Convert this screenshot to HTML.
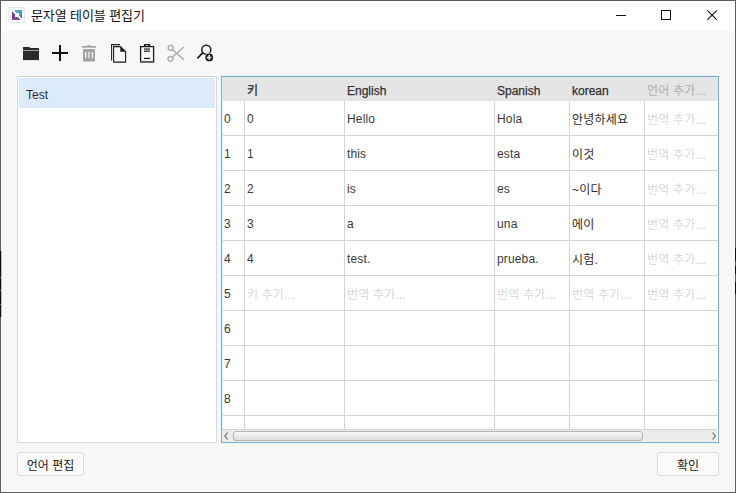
<!DOCTYPE html>
<html lang="ko">
<head>
<meta charset="utf-8">
<title>문자열 테이블 편집기</title>
<style>
html,body{margin:0;padding:0;}
body{width:736px;height:493px;overflow:hidden;background:#f7f7f7;position:relative;
 font-family:"Liberation Sans","Noto Sans CJK KR",sans-serif;font-size:12px;color:#222;}
.abs{position:absolute;}
#win{position:absolute;left:0;top:0;width:736px;height:493px;box-sizing:border-box;border:1px solid #5c5c5c;box-shadow:inset 0 0 0 1px #fff;background:#f7f7f7;}
#titlebar{position:absolute;left:1px;top:1px;width:734px;height:30px;background:#fff;}
#title{position:absolute;left:31px;top:8px;letter-spacing:-0.1px;font-size:13px;line-height:16px;color:#111;white-space:nowrap;}
#list{position:absolute;left:17px;top:76px;width:198px;height:365px;border:1px solid #d8d8d8;border-top-color:#cecece;background:#fff;}
#sel{position:absolute;left:1px;top:1px;width:196px;height:30px;background:#dcebfb;}
#sel span{position:absolute;left:7px;top:9px;line-height:16px;white-space:nowrap;color:#2a2f36;}
#table{position:absolute;left:221px;top:76px;width:496px;height:365px;border:1px solid #80b1cd;border-top-color:#7aa7c1;background:#fff;overflow:hidden;box-shadow:inset 1px 1px 0 #d9ebf6, 0 0 0 1px #eaf5fa;}
#thead{position:absolute;left:1px;top:1px;width:495px;height:23px;background:#e5e5e5;}
.th{position:absolute;top:7px;line-height:14px;font-weight:normal;-webkit-text-stroke:0.25px #303030;color:#303030;white-space:nowrap;font-size:12px;}
.vl{position:absolute;top:24px;width:1px;height:328px;background:#d4d4d4;}
.hl{position:absolute;left:1px;width:495px;height:1px;background:#d4d4d4;}
.c{position:absolute;line-height:16px;white-space:nowrap;color:#3a3a3a;margin-top:1px;letter-spacing:0.15px;}
.g{color:#cdcdcd;}
.k{margin-top:2px;letter-spacing:0.2px;font-weight:400;color:#2c2c2c;}
.g.k{color:#c8c8c8;font-weight:300;}
.th.k{margin-top:0px;font-weight:400;color:#2a2a2a;}
.th.g.k{color:#b4b4b4;}
.th.g{color:#b4b4b4;-webkit-text-stroke:0.15px #b4b4b4;}
#hscroll{position:absolute;left:0px;top:352px;width:495px;height:13px;background:#ebebeb;border-top:1px solid #d4d4d4;box-sizing:border-box;}
#thumb{position:absolute;left:11px;top:1px;width:410px;height:10px;border:1px solid #b4b4b4;border-radius:3px;background:linear-gradient(#f8f8f8,#dedede);box-sizing:border-box;}
.btn{position:absolute;height:24px;border:1px solid #dadada;border-radius:3px;background:#fafafa;box-sizing:border-box;text-align:center;line-height:20px;padding-top:3px;font-size:12px;color:#222;}
</style>
</head>
<body>
<div id="win"></div>
<div class="abs" style="left:0;top:251px;width:1px;height:66px;background:#111;box-shadow:1px 0 0 rgba(0,0,0,0.25)"></div>
<div class="abs" style="left:0;top:277px;width:1px;height:1px;background:#666"></div>
<div class="abs" style="left:0;top:290px;width:1px;height:1px;background:#666"></div>
<div class="abs" style="left:0;top:304px;width:1px;height:1px;background:#666"></div>
<div class="abs" style="left:735px;top:248px;width:1px;height:13px;background:#111"></div>
<div class="abs" style="left:735px;top:266px;width:1px;height:8px;background:#111"></div>
<div class="abs" style="left:735px;top:282px;width:1px;height:12px;background:#111"></div>
<div id="titlebar"></div>
<div id="title">문자열 테이블 편집기</div>

<svg id="appicon" class="abs" style="left:0;top:0" width="40" height="30" viewBox="0 0 40 30">
  <defs>
    <linearGradient id="gb" x1="0" y1="0" x2="1" y2="1"><stop offset="0" stop-color="#62bfdc"/><stop offset="1" stop-color="#2b86bd"/></linearGradient>
    <linearGradient id="gp" x1="0" y1="0" x2="1" y2="1"><stop offset="0" stop-color="#6a3c98"/><stop offset="1" stop-color="#8b4f9f"/></linearGradient>
  </defs>
  <rect x="9" y="7.5" width="15.5" height="15" fill="#fff" stroke="#dfe8ee" stroke-width="1"/>
  <path d="M13.4 10H22v8.8l-3-3V13h-2.6z" fill="url(#gb)"/>
  <path d="M12 11.2V20h8.8l-3-3H15v-2.8z" fill="url(#gp)"/>
</svg>
<svg id="ctrl" class="abs" style="left:600px;top:0" width="136" height="31" viewBox="600 0 136 31">
  <rect x="616" y="15" width="10" height="1" fill="#111"/>
  <rect x="661.5" y="10.5" width="9" height="9" fill="none" stroke="#111" stroke-width="1"/>
  <path d="M707.3 10.3L716.9 19.9M716.9 10.3L707.3 19.9" stroke="#111" stroke-width="1.1" fill="none"/>
</svg>
<svg id="icons" class="abs" style="left:0;top:0" width="736" height="76" viewBox="0 0 736 76">
  <!-- folder -->
  <path d="M23 47h6.2l1.2 1H39v2H23z" fill="#2a2a2a"/>
  <rect x="23" y="50.6" width="16" height="9.5" fill="#2a2a2a"/>
  <!-- plus -->
  <rect x="52" y="52" width="16" height="2" fill="#111"/>
  <rect x="59" y="45" width="2" height="16" fill="#111"/>
  <!-- trash -->
  <g fill="#a3a3a3">
    <rect x="82" y="46" width="14" height="1.7"/>
    <rect x="87" y="45.2" width="4" height="1"/>
    <path d="M83 49h12v12.6H83zM85 52v6h1.2v-6zM88.4 52v6h1.2v-6zM91.9 52v6h1.2v-6z" fill-rule="evenodd"/>
  </g>
  <!-- copy -->
  <path d="M120 44.6H111.6V60.6" fill="none" stroke="#1c1c1c" stroke-width="1.05"/>
  <path d="M113.6 46.6h6.9l5.1 5.1V62.1h-12z" fill="none" stroke="#1c1c1c" stroke-width="1.1"/>
  <path d="M120.3 46.6v5.1h5.2z" fill="#1c1c1c"/>
  <!-- paste -->
  <rect x="140.6" y="46.6" width="13" height="15.2" fill="none" stroke="#1c1c1c" stroke-width="1.3"/>
  <rect x="140" y="61" width="14.2" height="1.5" fill="#555"/>
  <path d="M144 44h6.2v2.6H144zM146 45.2v1.4h2.2v-1.4z" fill="#1c1c1c" fill-rule="evenodd"/>
  <rect x="144" y="48.45" width="6" height="1.2" fill="#1c1c1c"/>
  <rect x="144" y="50.6" width="6" height="1.2" fill="#1c1c1c"/>
  <rect x="144" y="57.8" width="6" height="1.3" fill="#1c1c1c"/>
  <!-- scissors -->
  <g fill="none" stroke="#a9a9a9" stroke-width="1.3">
    <circle cx="170.7" cy="47.9" r="2.5"/>
    <circle cx="170.5" cy="58.8" r="2.5"/>
    <path d="M172.6 49.7L183.8 59.8M172.4 57L183.8 47.1"/>
  </g>
  <!-- search plus -->
  <circle cx="206.3" cy="49.7" r="4.5" fill="none" stroke="#1a1a1a" stroke-width="1.5"/>
  <path d="M202.8 52.6L197.5 58.3" stroke="#1a1a1a" stroke-width="1.7" fill="none"/>
  <circle cx="209.2" cy="57.4" r="4.7" fill="#f7f7f7"/>
  <circle cx="209.2" cy="57.4" r="3.9" fill="#1a1a1a"/>
  <path d="M206.9 57.4h4.6M209.2 55.1v4.6" stroke="#fff" stroke-width="1.5"/>
</svg>

<div id="list"><div id="sel"><span>Test</span></div></div>

<div id="table">
  <div id="thead"></div>
  <div class="th k" style="left:25px">키</div>
  <div class="th" style="left:125px">English</div>
  <div class="th" style="left:275px">Spanish</div>
  <div class="th" style="left:350px">korean</div>
  <div class="th g k" style="left:425px">언어 추가...</div>
<!--ROWS-->
  <div class="vl" style="left:22px"></div>
  <div class="vl" style="left:122px"></div>
  <div class="vl" style="left:272px"></div>
  <div class="vl" style="left:347px"></div>
  <div class="vl" style="left:422px"></div>
  <div class="hl" style="top:58px"></div>
  <div class="hl" style="top:93px"></div>
  <div class="hl" style="top:128px"></div>
  <div class="hl" style="top:163px"></div>
  <div class="hl" style="top:198px"></div>
  <div class="hl" style="top:233px"></div>
  <div class="hl" style="top:268px"></div>
  <div class="hl" style="top:303px"></div>
  <div class="hl" style="top:338px"></div>
  <div class="c" style="left:2px;top:33px">0</div>
  <div class="c" style="left:25px;top:33px">0</div>
  <div class="c" style="left:125px;top:33px">Hello</div>
  <div class="c" style="left:275px;top:33px">Hola</div>
  <div class="c k" style="left:350px;top:33px">안녕하세요</div>
  <div class="c g k" style="left:425px;top:33px">번역 추가...</div>
  <div class="c" style="left:2px;top:68px">1</div>
  <div class="c" style="left:25px;top:68px">1</div>
  <div class="c" style="left:125px;top:68px">this</div>
  <div class="c" style="left:275px;top:68px">esta</div>
  <div class="c k" style="left:350px;top:68px">이것</div>
  <div class="c g k" style="left:425px;top:68px">번역 추가...</div>
  <div class="c" style="left:2px;top:103px">2</div>
  <div class="c" style="left:25px;top:103px">2</div>
  <div class="c" style="left:125px;top:103px">is</div>
  <div class="c" style="left:275px;top:103px">es</div>
  <div class="c k" style="left:350px;top:103px">~이다</div>
  <div class="c g k" style="left:425px;top:103px">번역 추가...</div>
  <div class="c" style="left:2px;top:138px">3</div>
  <div class="c" style="left:25px;top:138px">3</div>
  <div class="c" style="left:125px;top:138px">a</div>
  <div class="c" style="left:275px;top:138px">una</div>
  <div class="c k" style="left:350px;top:138px">에이</div>
  <div class="c g k" style="left:425px;top:138px">번역 추가...</div>
  <div class="c" style="left:2px;top:173px">4</div>
  <div class="c" style="left:25px;top:173px">4</div>
  <div class="c" style="left:125px;top:173px">test.</div>
  <div class="c" style="left:275px;top:173px">prueba.</div>
  <div class="c k" style="left:350px;top:173px">시험.</div>
  <div class="c g k" style="left:425px;top:173px">번역 추가...</div>
  <div class="c" style="left:2px;top:208px">5</div>
  <div class="c g k" style="left:25px;top:208px">키 추가...</div>
  <div class="c g k" style="left:125px;top:208px">번역 추가...</div>
  <div class="c g k" style="left:275px;top:208px">번역 추가...</div>
  <div class="c g k" style="left:350px;top:208px">번역 추가...</div>
  <div class="c g k" style="left:425px;top:208px">번역 추가...</div>
  <div class="c" style="left:2px;top:243px">6</div>
  <div class="c" style="left:2px;top:278px">7</div>
  <div class="c" style="left:2px;top:313px">8</div>
<!--/ROWS-->
  <div id="hscroll"><div id="thumb"></div><svg class="abs" style="left:0;top:0" width="495" height="12" viewBox="0 0 495 12"><path d="M5.6 2.5L2.8 5.9L5.6 9.3M490.6 2.5L493.4 5.9L490.6 9.3" fill="none" stroke="#787878" stroke-width="1.2"/></svg></div>
</div>

<div class="btn" style="left:17px;top:452px;width:67px;">언어 편집</div>
<div class="btn" style="left:657px;top:452px;width:62px;">확인</div>
</body>
</html>
